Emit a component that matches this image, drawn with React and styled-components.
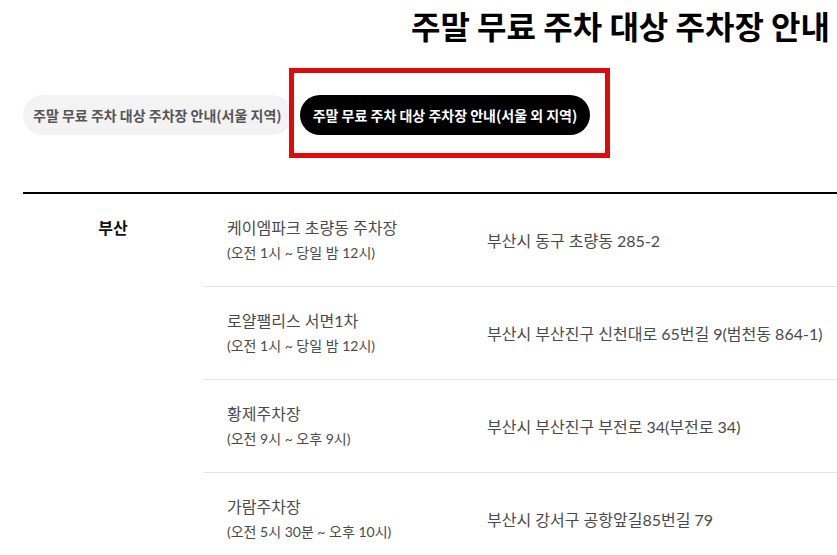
import React from "react";
import styled, { createGlobalStyle } from "styled-components";

const Global = createGlobalStyle`
  html, body { margin: 0; padding: 0; background: #fff; }
  body { font-family: Lato, "Noto Sans CJK KR", sans-serif; overflow: hidden; }
  * { box-sizing: border-box; }
`;

const Page = styled.div`
  width: 837px;
  padding-left: 23px;
  overflow: hidden;
`;

const TitleRow = styled.div`
  display: flex;
  justify-content: flex-end;
  padding-right: 7px;
  height: 50px;
  align-items: center;
`;

const Title = styled.h1`
  margin: 0;
  font-family: "Noto Sans CJK KR", sans-serif;
  font-size: 32px;
  font-weight: 700;
  color: #000;
  line-height: 50px;
  white-space: nowrap;
`;

const Tabs = styled.div`
  display: flex;
  gap: 8px;
  margin-top: 45px;
`;

const TabWrap = styled.div`
  position: relative;
`;

const Tab = styled.button`
  height: 40px;
  padding: 0 ${(p) => (p.$active ? "13px" : "10px")};
  border: none;
  border-radius: 20px;
  font-family: "Noto Sans CJK KR", sans-serif;
  font-size: 14px;
  font-weight: 700;
  white-space: nowrap;
  background: ${(p) => (p.$active ? "#000" : "#f3f3f3")};
  color: ${(p) => (p.$active ? "#fff" : "#555")};
  cursor: pointer;
`;

const Highlight = styled.div`
  position: absolute;
  left: -11px;
  right: -20px;
  top: -27px;
  bottom: -23px;
  border: 5px solid #e00a0a;
  pointer-events: none;
`;

const Rule = styled.div`
  margin-top: 57px;
  height: 2px;
  background: #000;
`;

const Table = styled.div`
  display: grid;
  grid-template-columns: 180px 1fr;
`;

const Region = styled.div`
  padding-top: 21px;
  text-align: center;
  font-family: "Noto Sans CJK KR", sans-serif;
  font-size: 16px;
  font-weight: 700;
  line-height: 25px;
  color: #111;
`;

const Rows = styled.div`
  display: flex;
  flex-direction: column;
`;

const Row = styled.div`
  display: grid;
  grid-template-columns: 260px 1fr;
  padding: 21px 0;
  border-bottom: 1px solid #e6e6e6;
`;

const NameCell = styled.div`
  padding-left: 24px;
  display: flex;
  flex-direction: column;
`;

const Name = styled.span`
  font-size: 16px;
  line-height: 25px;
  color: #4a4a4a;
  white-space: nowrap;
`;

const Hours = styled.span`
  font-size: 14px;
  line-height: 25px;
  color: #4a4a4a;
  white-space: nowrap;
`;

const Address = styled.div`
  padding-left: 24px;
  align-self: center;
  font-size: 16px;
  line-height: 25px;
  color: #4a4a4a;
  white-space: nowrap;
`;

const lots = [
  { name: "케이엠파크 초량동 주차장", hours: "(오전 1시 ~ 당일 밤 12시)", addr: "부산시 동구 초량동 285-2" },
  { name: "로얄팰리스 서면1차", hours: "(오전 1시 ~ 당일 밤 12시)", addr: "부산시 부산진구 신천대로 65번길 9(범천동 864-1)" },
  { name: "황제주차장", hours: "(오전 9시 ~ 오후 9시)", addr: "부산시 부산진구 부전로 34(부전로 34)" },
  { name: "가람주차장", hours: "(오전 5시 30분 ~ 오후 10시)", addr: "부산시 강서구 공항앞길85번길 79" },
];

export default function App() {
  return (
    <>
      <Global />
      <Page>
        <TitleRow>
          <Title>주말 무료 주차 대상 주차장 안내</Title>
        </TitleRow>
        <Tabs>
          <TabWrap>
            <Tab>주말 무료 주차 대상 주차장 안내(서울 지역)</Tab>
          </TabWrap>
          <TabWrap>
            <Tab $active>주말 무료 주차 대상 주차장 안내(서울 외 지역)</Tab>
            <Highlight />
          </TabWrap>
        </Tabs>
        <Rule />
        <Table>
          <Region>부산</Region>
          <Rows>
            {lots.map((l) => (
              <Row key={l.name}>
                <NameCell>
                  <Name>{l.name}</Name>
                  <Hours>{l.hours}</Hours>
                </NameCell>
                <Address>{l.addr}</Address>
              </Row>
            ))}
          </Rows>
        </Table>
      </Page>
    </>
  );
}
